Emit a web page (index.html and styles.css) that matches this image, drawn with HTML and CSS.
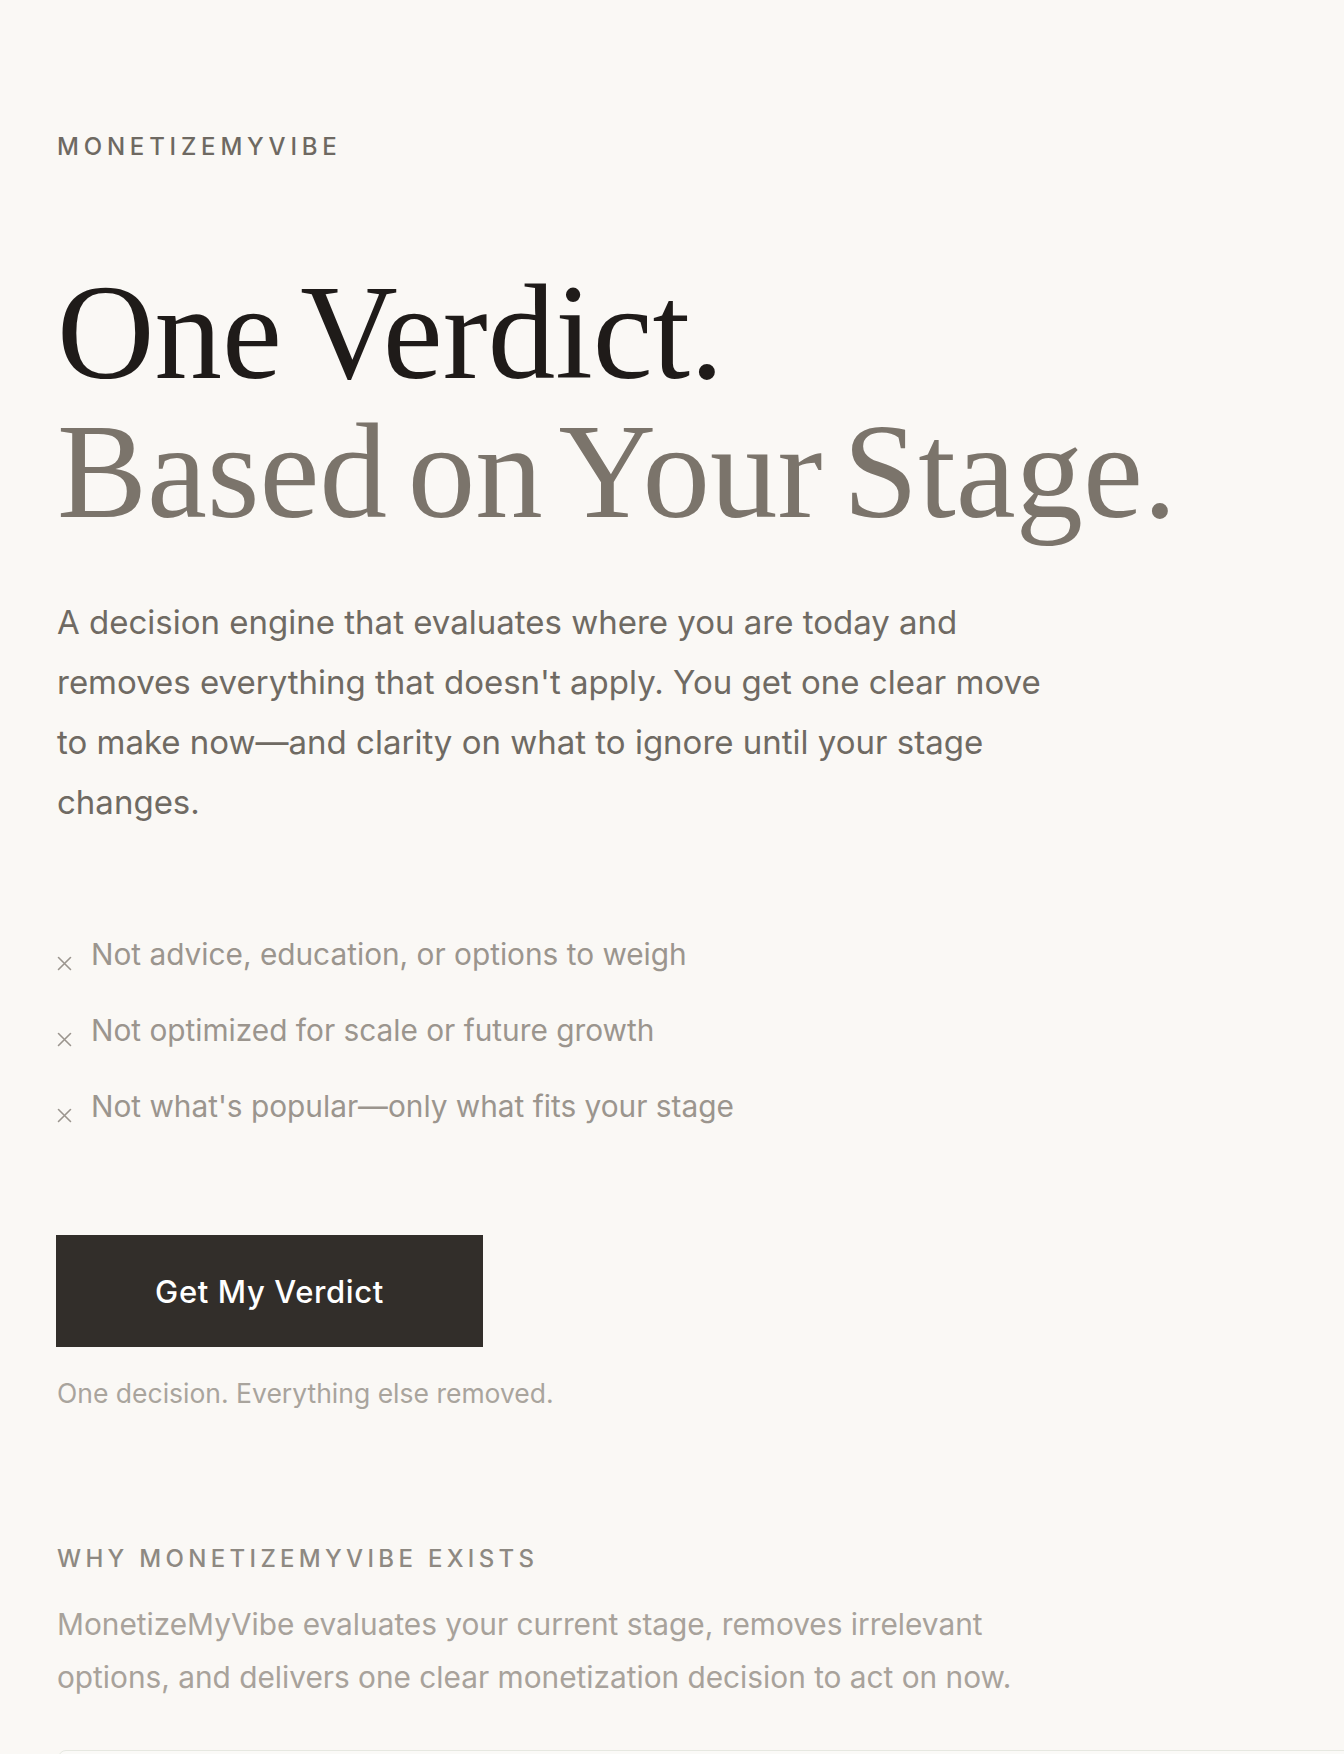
FILE: index.html
```html
<!DOCTYPE html>
<html lang="en">
<head>
<meta charset="utf-8">
<title>MonetizeMyVibe</title>
<link rel="stylesheet" href="styles.css">
</head>
<body>
<main class="page">
  <div class="brand">MONETIZEMYVIBE</div>

  <h1 class="headline">
    <span class="headline-main">One Verdict.</span>
    <span class="headline-sub">Based on Your Stage.</span>
  </h1>

  <p class="lede">A decision engine that evaluates where you are today and removes everything that doesn't apply. You get one clear move to make now—and clarity on what to ignore until your stage changes.</p>

  <ul class="nots">
    <li class="not-item"><svg class="not-mark" viewBox="0 0 15 15" width="15" height="15" aria-hidden="true"><path d="M1.5 1.5 L13.5 13.5 M13.5 1.5 L1.5 13.5" /></svg><span>Not advice, education, or options to weigh</span></li>
    <li class="not-item"><svg class="not-mark" viewBox="0 0 15 15" width="15" height="15" aria-hidden="true"><path d="M1.5 1.5 L13.5 13.5 M13.5 1.5 L1.5 13.5" /></svg><span>Not optimized for scale or future growth</span></li>
    <li class="not-item"><svg class="not-mark" viewBox="0 0 15 15" width="15" height="15" aria-hidden="true"><path d="M1.5 1.5 L13.5 13.5 M13.5 1.5 L1.5 13.5" /></svg><span>Not what's popular—only what fits your stage</span></li>
  </ul>

  <button class="cta" type="button">Get My Verdict</button>
  <p class="cta-note">One decision. Everything else removed.</p>

  <section class="why">
    <h2 class="eyebrow">WHY MONETIZEMYVIBE EXISTS</h2>
    <p class="why-text">MonetizeMyVibe evaluates your current stage, removes irrelevant options, and delivers one clear monetization decision to act on now.</p>
  </section>

  <div class="card"></div>
</main>
</body>
</html>
```

FILE: styles.css
```css
* { box-sizing: border-box; }

html, body {
  margin: 0;
  padding: 0;
  background: #faf8f5;
}

body {
  font-family: Inter, "Liberation Sans", Arial, sans-serif;
  overflow-x: hidden;
}

.page {
  padding: 135px 0 0 57px;
  min-height: 1754px;
}

.brand {
  font-size: 24px;
  line-height: 24px;
  letter-spacing: 0.2em;
  color: #6e6962;
  font-weight: 500;
}

.headline {
  margin: 104px 0 0;
  font-family: "Liberation Serif", "Times New Roman", serif;
  font-weight: 400;
  font-size: 135px;
  line-height: 139px;
  letter-spacing: 0;
  word-spacing: -13px;
}

.headline-main,
.headline-sub {
  display: block;
}

.headline-main { color: #1f1b19; }
.headline-sub { color: #7b746b; }

.lede {
  margin: 51px 0 0;
  max-width: 1005px;
  font-size: 33px;
  line-height: 60px;
  color: #6f6a63;
}

.nots {
  list-style: none;
  margin: 101px 0 0;
  padding: 0;
  display: flex;
  flex-direction: column;
  gap: 34px;
}

.not-item {
  display: flex;
  align-items: center;
  gap: 19px;
  font-size: 29.8px;
  line-height: 42px;
  color: #9b958e;
}

.not-mark {
  flex: none;
  margin-top: 18px;
  fill: none;
  stroke: #9b958e;
  stroke-width: 1.6;
  stroke-linecap: round;
}

.cta {
  display: block;
  margin: 108px 0 0 -1px;
  width: 427px;
  height: 112px;
  border: 0;
  border-radius: 0;
  background: #322e2a;
  color: #ffffff;
  font-family: Inter, "Liberation Sans", Arial, sans-serif;
  font-size: 31px;
  font-weight: 500;
  letter-spacing: 0.02em;
  cursor: pointer;
}

.cta-note {
  margin: 30px 0 0;
  font-size: 26.5px;
  line-height: 32px;
  color: #a9a49d;
}

.why {
  margin-top: 138px;
}

.eyebrow {
  margin: 0;
  font-size: 24px;
  line-height: 24px;
  font-weight: 500;
  letter-spacing: 0.18em;
  color: #8e8982;
}

.why-text {
  margin: 27px 0 0;
  max-width: 1000px;
  font-size: 29.8px;
  line-height: 53px;
  color: #a8a29b;
}

.card {
  margin: 46px -40px 0 1px;
  height: 200px;
  border: 1px solid #e6e8e1;
  border-radius: 8px;
  background: #fbfaf8;
}
```
